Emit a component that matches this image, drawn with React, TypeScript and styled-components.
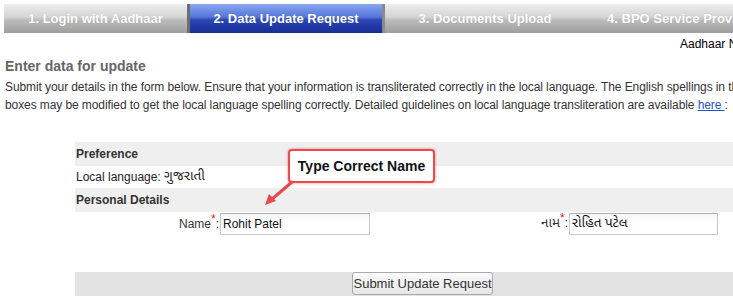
import React from 'react';
import styled, { createGlobalStyle } from 'styled-components';

const GlobalStyle = createGlobalStyle`
  html, body {
    margin: 0;
    padding: 0;
    background: #ffffff;
    overflow: hidden;
  }
  body {
    font-family: 'Liberation Sans', Arial, 'Noto Sans Gujarati', 'Noto Sans', sans-serif;
    color: #333;
  }
`;

const Page = styled.div`
  width: 1000px;
  padding-top: 4px;
`;

const TabBar = styled.div`
  display: flex;
  margin-left: 4px;
  height: 29px;
`;

const Tab = styled.div<{ active?: boolean; w: number }>`
  width: ${p => p.w}px;
  flex-shrink: 0;
  display: flex;
  align-items: center;
  justify-content: center;
  font-size: 13px;
  font-weight: bold;
  color: #fff;
  text-shadow: 0 0 1px rgba(0, 0, 0, 0.15);
  white-space: nowrap;
  ${p => p.active ? `
    margin: 0 3px;
    background: linear-gradient(to bottom, #8aa6ee 0%, #5575da 45%, #2c46b4 55%, #182c94 100%);
    box-shadow: -3px 0 0 #6e6e6e, 3px 0 0 #8a8a8a;
  ` : `
    background: linear-gradient(to bottom, #eeeeee 0%, #d4d4d4 45%, #bcbcbc 55%, #9e9e9e 100%);
  `}
`;

const AadhaarRow = styled.div`
  margin-top: 2px;
  padding-left: 680px;
  font-size: 12px;
  line-height: 18px;
  color: #000;
  white-space: nowrap;
`;

const Intro = styled.div`
  padding-left: 5px;
`;

const Heading = styled.h2`
  margin: 4px 0 0 0;
  font-size: 14px;
  line-height: 18px;
  font-weight: bold;
  color: #666;
`;

const Para = styled.p`
  margin: 3px 0 0 0;
  font-size: 12px;
  line-height: 18px;
  letter-spacing: -0.09px;
  color: #333;
  white-space: nowrap;
`;

const Link = styled.a`
  color: #1a55cc;
  text-decoration: underline;
`;

const Gujarati = styled.span`
  font-family: 'Noto Sans Gujarati', 'Noto Sans', sans-serif;
  font-size: 13.5px;
`;

const Form = styled.div`
  position: relative;
  margin: 28px 0 0 75px;
  width: 900px;
`;

const Row = styled.div<{ shade?: boolean; h: number }>`
  height: ${p => p.h}px;
  display: flex;
  align-items: center;
  padding-left: 1px;
  font-size: 12px;
  color: #222;
  white-space: pre;
  background: ${p => (p.shade ? '#efefef' : 'transparent')};
`;

const SectionTitle = styled.span`
  font-weight: bold;
  color: #333;
`;

const FieldRow = styled.div`
  display: grid;
  grid-template-columns: 145px 150px 199px 149px;
  align-items: center;
  height: 24px;
  font-size: 12px;
`;

const Label = styled.label`
  text-align: right;
  padding-right: 1px;
  color: #333;
`;

const Star = styled.sup`
  color: #e02020;
  font-size: 12px;
  line-height: 0;
`;

const TextInput = styled.div`
  height: 22px;
  box-sizing: border-box;
  border: 1px solid #c9c9c9;
  border-top-color: #b0b0b0;
  background: linear-gradient(to bottom, #f4f6f8 0%, #ffffff 40%);
  display: flex;
  align-items: center;
  padding-left: 2px;
  font-size: 12px;
  color: #111;
`;

const SubmitRow = styled.div`
  margin-top: 36px;
  height: 24px;
  background: #e3e3e3;
  padding-left: 277px;
  display: flex;
  align-items: flex-start;
`;

const SubmitButton = styled.button`
  width: 141px;
  height: 23px;
  padding: 0;
  font-family: 'Liberation Sans', Arial, sans-serif;
  font-size: 13px;
  color: #333;
  background: linear-gradient(to bottom, #fbfbfb 0%, #e6e6e6 100%);
  border: 1px solid #a9a9a9;
  border-radius: 3px;
  cursor: pointer;
`;

const Callout = styled.div`
  position: absolute;
  left: 213px;
  top: 7px;
  width: 147px;
  height: 34px;
  box-sizing: border-box;
  background: #fff;
  border: 2px solid #ec4a4f;
  border-radius: 4px;
  box-shadow: 0 0 3px rgba(230, 60, 60, 0.6);
  display: flex;
  align-items: center;
  justify-content: center;
  font-size: 14px;
  font-weight: bold;
  color: #111;
  white-space: nowrap;
`;

const Arrow = styled.svg`
  position: absolute;
  left: 186px;
  top: 38px;
`;

const App: React.FC = () => {
  return (
    <>
      <GlobalStyle />
      <Page>
        <TabBar>
          <Tab w={183}>1. Login with Aadhaar</Tab>
          <Tab w={192} active>2. Data Update Request</Tab>
          <Tab w={200}>3. Documents Upload</Tab>
          <Tab w={193}>4. BPO Service Provider</Tab>
        </TabBar>

        <AadhaarRow>Aadhaar No: XXXX XXXX 1234</AadhaarRow>

        <Intro>
          <Heading>Enter data for update</Heading>
          <Para>
            Submit your details in the form below. Ensure that your information is transliterated correctly in the local language. The English spellings in the text
            <br />
            boxes may be modified to get the local language spelling correctly. Detailed guidelines on local language transliteration are available <Link href="#">here </Link>:
          </Para>
        </Intro>

        <Form>
          <Row shade h={24}>
            <SectionTitle>Preference</SectionTitle>
          </Row>
          <Row h={22}>
            Local language: <Gujarati>ગુજરાતી</Gujarati>
          </Row>
          <Row shade h={24}>
            <SectionTitle>Personal Details</SectionTitle>
          </Row>
          <FieldRow>
            <Label>Name<Star>*</Star>:</Label>
            <TextInput>Rohit Patel</TextInput>
            <Label><Gujarati>નામ</Gujarati><Star>*</Star>:</Label>
            <TextInput><Gujarati>રોહિત પટેલ</Gujarati></TextInput>
          </FieldRow>
          <SubmitRow>
            <SubmitButton>Submit Update Request</SubmitButton>
          </SubmitRow>

          <Callout>Type Correct Name</Callout>
          <Arrow width="34" height="30" viewBox="0 0 34 30">
            <line x1="31" y1="2" x2="10" y2="20" stroke="#e8484c" strokeWidth="3" strokeLinecap="round" />
            <polygon points="4,25 8,14 15,21" fill="#e8484c" />
          </Arrow>
        </Form>
      </Page>
    </>
  );
};

export default App;
